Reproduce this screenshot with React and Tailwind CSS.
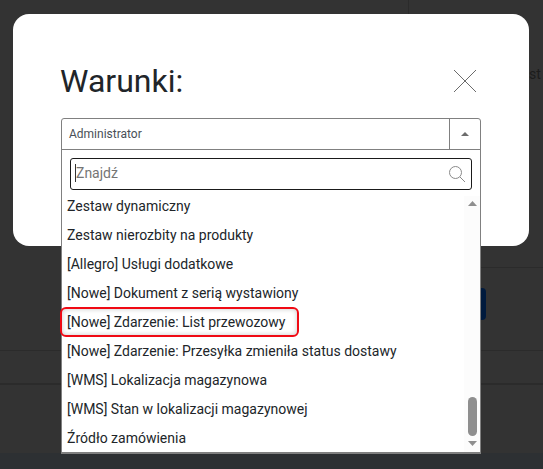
import React from "react";

const items = [
  "Zestaw dynamiczny",
  "Zestaw nierozbity na produkty",
  "[Allegro] Usługi dodatkowe",
  "[Nowe] Dokument z serią wystawiony",
  "[Nowe] Zdarzenie: List przewozowy",
  "[Nowe] Zdarzenie: Przesyłka zmieniła status dostawy",
  "[WMS] Lokalizacja magazynowa",
  "[WMS] Stan w lokalizacji magazynowej",
  "Źródło zamówienia",
];

export default function App() {
  return (
    <div className="relative w-[543px] h-[469px] overflow-hidden bg-[#333333] font-['Roboto',sans-serif]">
      {/* dimmed page behind the modal */}
      <div className="flex flex-col h-full">
        <div className="h-[268px] flex justify-end">
          <div className="w-[135px] border-l border-[#2b2b2b] pl-[120px] pt-[64px] text-[14px] leading-[20px] text-[#1c1c1c] border-b border-b-[#2b2b2b]">st</div>
        </div>
        <div className="h-[83px] border-b border-[#2b2b2b] flex justify-end items-start pt-[20px] pr-[57px]">
          <div className="w-[60px] h-[32px] rounded bg-[#001a3d]" />
        </div>
        <div className="h-[34px] border-b-2 border-[#2b2b2b]" />
        <div className="flex-1" />
        <div className="h-[16px] bg-[#2d3033]" />
      </div>

      {/* modal */}
      <div className="absolute left-[13px] top-[14px] w-[516px] h-[232px] rounded-2xl bg-white pt-[48px] pl-[48px]">
        <div className="flex items-start justify-between h-[56px] w-[420px]">
          <h1 className="-ml-px text-[32px] leading-[38px] font-normal text-[#212529]">Warunki:</h1>
          <svg className="mt-[7px] mr-[4px]" width="24" height="24" viewBox="0 0 24 24" fill="none" stroke="#6b6b6b" strokeWidth="1">
            <path d="M1 1L23 23M23 1L1 23" />
          </svg>
        </div>

        {/* select */}
        <div className="relative w-[420px]">
          <div className="flex h-[32px] border border-[#808080] rounded-t-[3px] bg-white">
            <div className="flex-1 flex items-center pl-[7px] text-[12px] text-[#495057]">Administrator</div>
            <div className="w-[31px] flex items-center justify-center border-l border-[#808080]">
              <svg width="8" height="4" viewBox="0 0 8 4"><path d="M4 0L8 4H0Z" fill="#6c6c6c" /></svg>
            </div>
          </div>

          {/* dropdown */}
          <div className="absolute left-0 top-[31px] w-full h-[305px] border border-t-0 border-[#808080] border-b-2 bg-white z-10">
            <div className="border-t border-[#808080] pt-[8px] px-[8px]">
              <div className="flex items-center h-[32px] w-[402px] border border-[#1a1a1a] rounded-[3px] pl-[4px] pr-[6px]">
                <span className="flex-1 -mt-[2px] text-[14px] text-[#757575] border-l border-[#333333] leading-[18px]">Znajdź</span>
                <svg className="-mt-[1px]" width="17" height="17" viewBox="0 0 17 17" fill="none" stroke="#8a8a8a" strokeWidth="1">
                  <circle cx="7.5" cy="7.5" r="6" />
                  <path d="M12 12L17 17" />
                </svg>
              </div>
            </div>
            <ul className="pt-[2px]">
              {items.map((t, i) => (
                <li
                  key={t}
                  className="h-[29px] flex items-center pl-[5px] text-[14px] text-[#212529] whitespace-nowrap"
                >
                  {i === 4 ? (
                    <span className="relative z-10 flex items-center self-start -mt-px h-[30px] -ml-[7px] pl-[5px] w-[239px] border-2 border-[#f00a14] rounded-[6px] bg-white shadow-[inset_0_0_5px_rgba(0,0,0,0.22)]">{t}</span>
                  ) : (
                    t
                  )}
                </li>
              ))}
            </ul>
            {/* scrollbar */}
            <div className="absolute right-0 top-[47px] bottom-0 w-[16px] bg-[#fcfcfc] flex flex-col items-center justify-between">
              <svg className="mt-[5px]" width="9" height="5" viewBox="0 0 9 5"><path d="M4.5 0L9 5H0Z" fill="#8f8f8f" /></svg>
              <div className="flex flex-col items-center">
                <div className="w-[9px] h-[39px] rounded-full bg-[#8f8f8f] mb-[5px]" />
                <svg className="mb-[6px]" width="9" height="5" viewBox="0 0 9 5"><path d="M4.5 5L9 0H0Z" fill="#8f8f8f" /></svg>
              </div>
            </div>
          </div>
        </div>
      </div>
    </div>
  );
}
